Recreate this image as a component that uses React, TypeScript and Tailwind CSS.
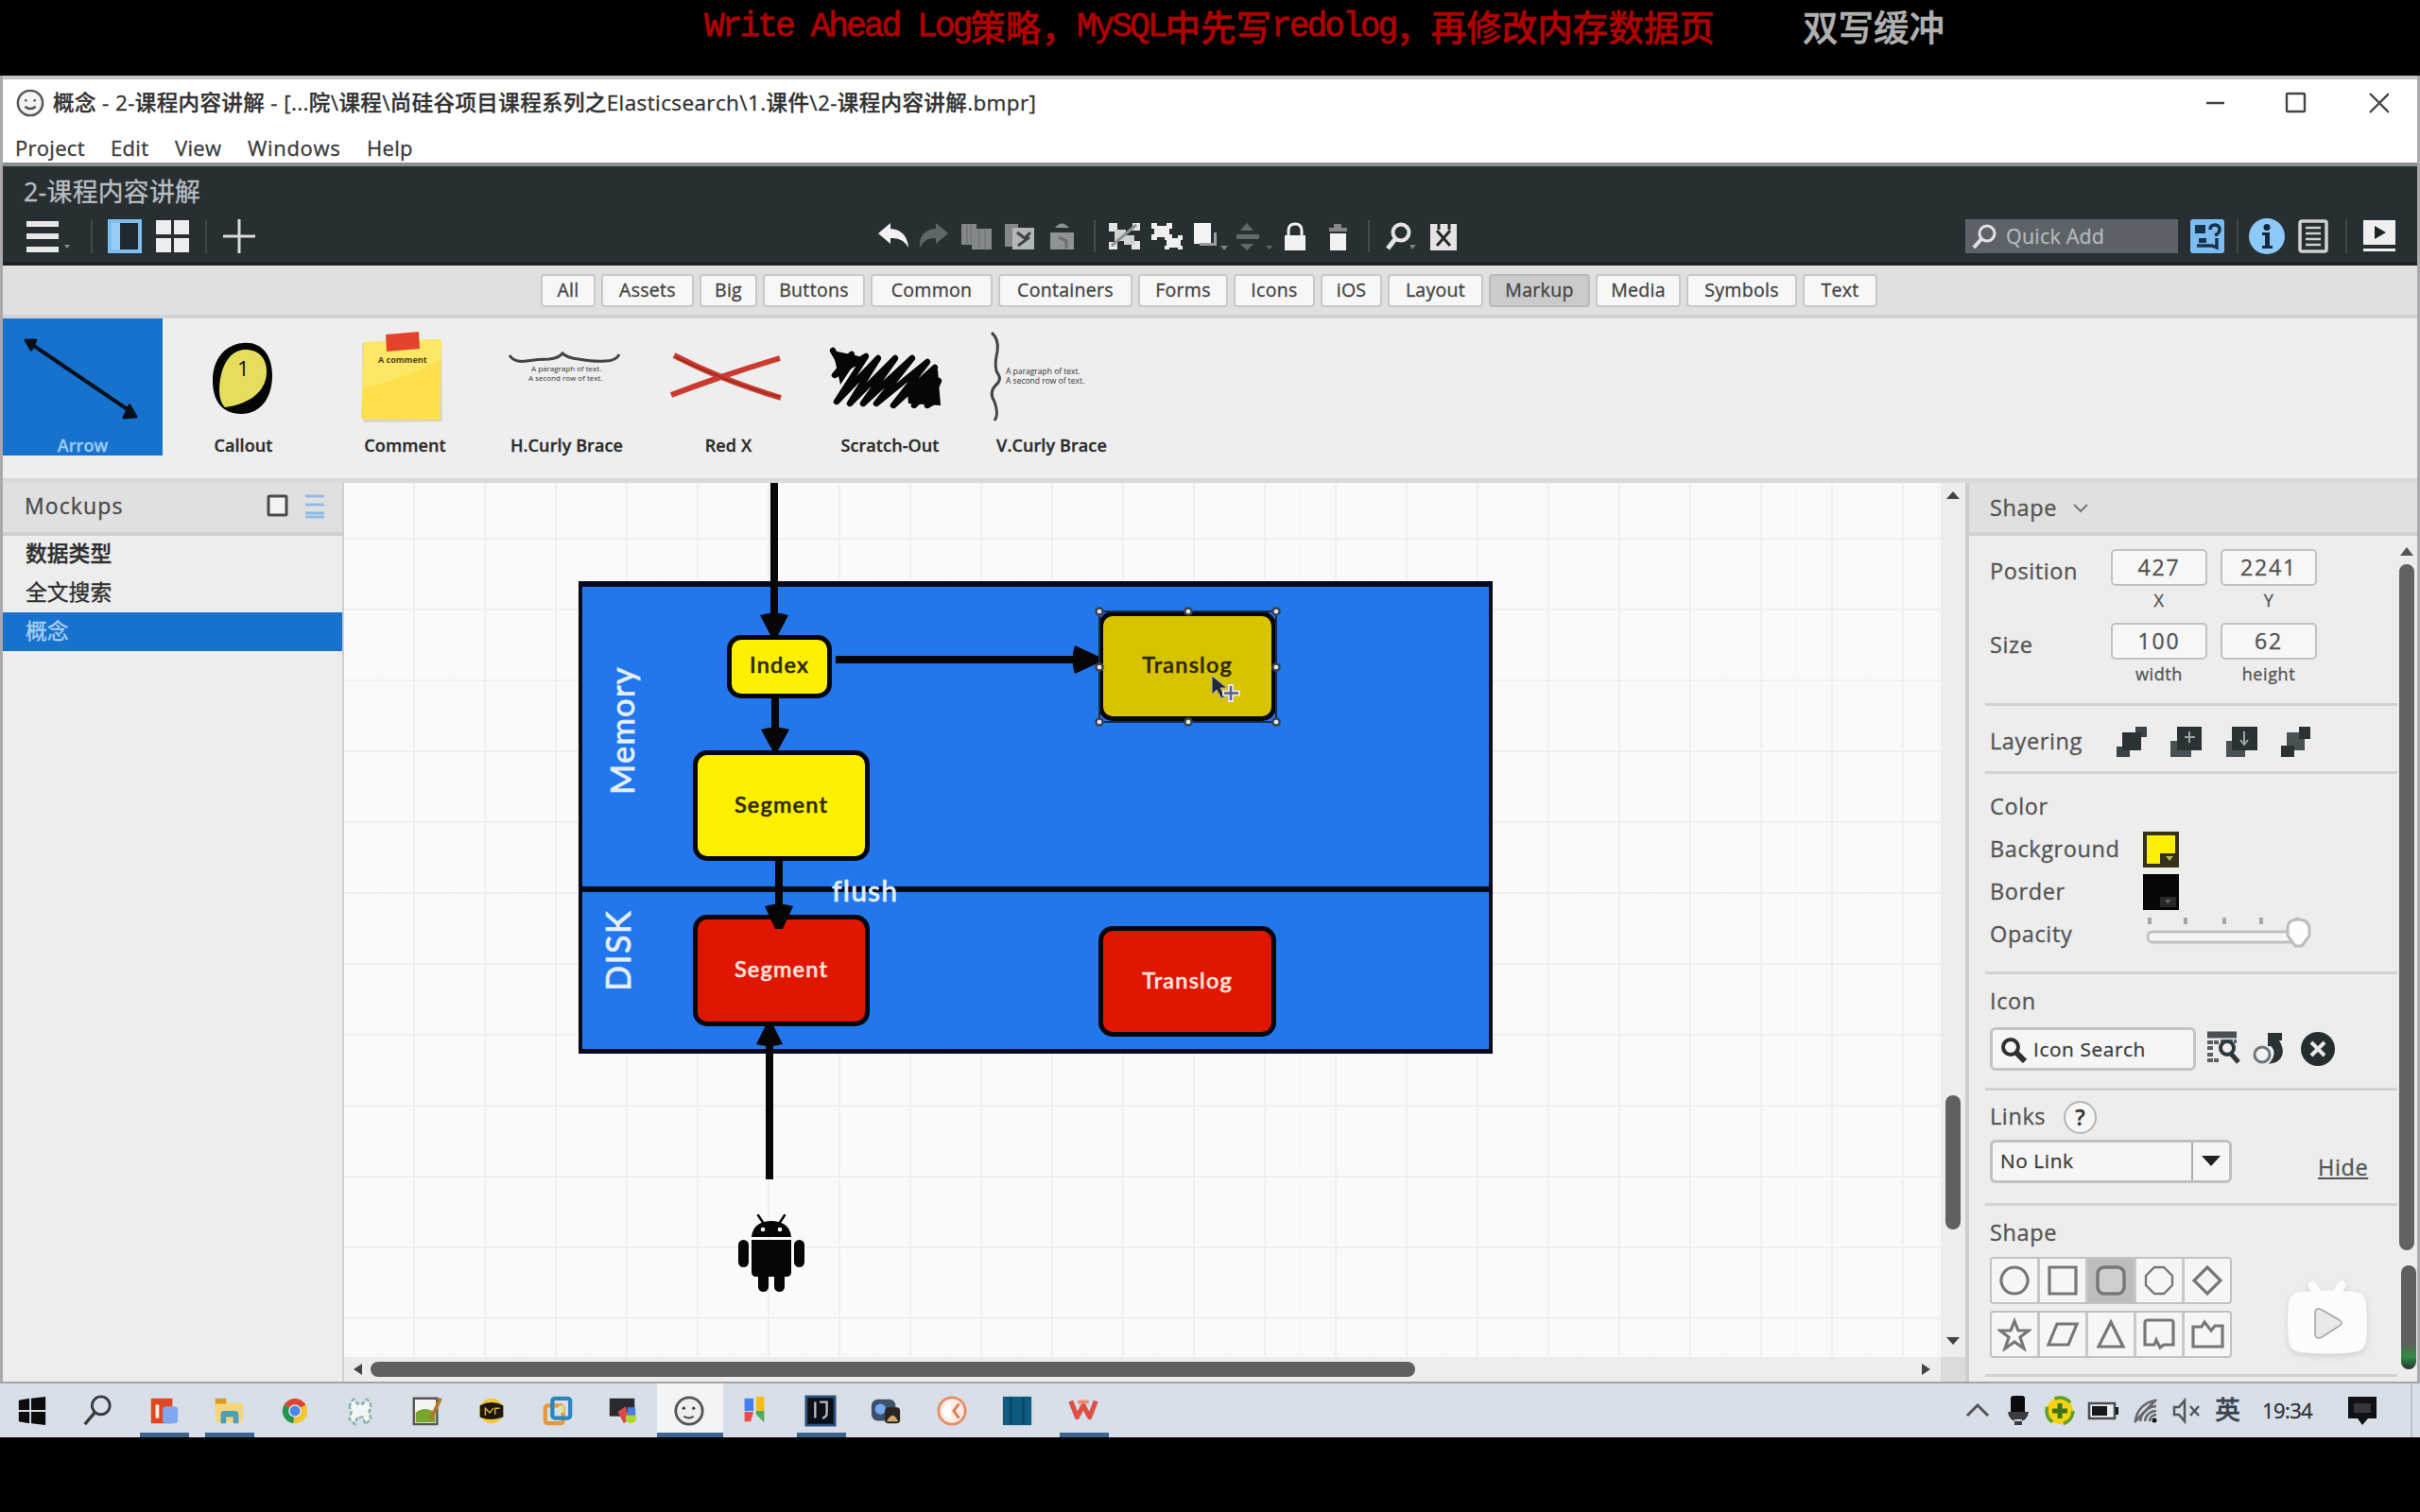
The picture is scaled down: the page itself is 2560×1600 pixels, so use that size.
import React from "react";

const SANS = "font-['Open_Sans','Noto_Sans_CJK_SC',sans-serif]";

/* ---------- top banner ---------- */

function Banner() {
  return (
    <div className="flex h-20 shrink-0 items-start bg-black pl-[745px] font-['Liberation_Mono','Noto_Sans_CJK_SC',monospace] leading-[56px] whitespace-pre">
      <div className="flex w-[1162px] text-[#b00000]">
        <Latin>Write Ahead Log</Latin>
        <Han>策略，</Han>
        <Latin>MySQL</Latin>
        <Han>中先写</Han>
        <Latin>redolog</Latin>
        <Han>，再修改内存数据页</Han>
      </div>
      <div className="text-[#b0b0b0]">
        <Han>双写缓冲</Han>
      </div>
    </div>
  );
}
const Latin = ({ children }: { children: string }) => (
  <span className="pt-px text-[36px] tracking-[-2.85px] [-webkit-text-stroke:0.8px]">{children}</span>
);
const Han = ({ children }: { children: string }) => (
  <span className="block font-['Noto_Sans_CJK_SC',sans-serif] text-[37.5px] leading-[54px] font-medium [-webkit-text-stroke:0.5px]">{children}</span>
);

/* ---------- title bar and menu ---------- */

const Face = ({ className }: { className: string }) => (
  <svg viewBox="0 0 32 32" className={className} fill="none" stroke="#555" strokeWidth="2.6">
    <circle cx="16" cy="16" r="14" fill="#f4f4f4" />
    <circle cx="11" cy="13" r="1.4" fill="#555" stroke="none" />
    <circle cx="21" cy="13" r="1.4" fill="#555" stroke="none" />
    <path d="M10 20q6 5 12 0" />
  </svg>
);

function TitleBar() {
  return (
    <div className="flex h-[52px] items-center border-t-4 border-[#c4c2c4] bg-white pl-3.5 pr-[30px] pt-0.5">
      <Face className="size-[30px]" />
      <div className="ml-[9px] grow text-[22.5px] font-medium tracking-[0.39px] text-[#333] whitespace-pre">
        概念 - 2-课程内容讲解 - [...院\课程\尚硅谷项目课程系列之Elasticsearch\1.课件\2-课程内容讲解.bmpr]
      </div>
      <svg viewBox="0 0 200 30" className="h-[30px] w-[200px]" fill="none" stroke="#444" strokeWidth="2.4">
        <path d="M7 15h19M180 5l20 20M200 5l-20 20" />
        <rect x="92" y="5" width="19" height="19" rx="1" />
      </svg>
    </div>
  );
}

function MenuBar() {
  return (
    <div className="flex h-[44px] items-center border-b-4 border-[#8b8d8f] bg-white pl-[13px] pt-2 text-[22px] font-medium text-[#3c3c3c]">
      <span className="w-[101px] tracking-[0.3px]">Project</span>
      <span className="w-[68px] tracking-[0.3px]">Edit</span>
      <span className="w-[77px] tracking-[0.3px]">View</span>
      <span className="w-[126px] tracking-[0.7px]">Windows</span>
      <span className="tracking-[0.3px]">Help</span>
    </div>
  );
}

/* ---------- dark toolbar ---------- */

const Sep = ({ className }: { className: string }) => (
  <div className={`h-9 w-0.5 bg-[#40474a] ${className}`} />
);

function Toolbar() {
  return (
    <div className="h-[105px] shrink-0 border-b-4 border-[#1f2224] bg-[#282f32]">
      <div className="flex h-[56px] items-center pb-0.5 pl-[22px] text-[26.8px] tracking-[0.3px] text-[#b9bdbf]">2-课程内容讲解</div>
      <div className="flex h-9 items-center">
        <svg viewBox="0 0 50 36" className="ml-[25px] h-9 w-[50px]" fill="#e8e8e8">
          <path d="M0 2h34v6H0zM0 15h34v6H0zM0 29h34v6H0z" />
          <path d="M40 27h6l-3 4z" fill="#8a8f91" />
        </svg>
        <Sep className="ml-[18px]" />
        <svg viewBox="0 0 36 36" className="ml-4 size-9">
          <rect x="2" y="2" width="32" height="32" fill="#1d2a33" stroke="#7dbdf0" strokeWidth="4" />
          <path d="M4 4h9v28H4z" fill="#9acdf5" />
        </svg>
        <svg viewBox="0 0 36 36" className="ml-[15px] size-9" fill="#ededed">
          <path d="M0 1h16v15H0zM19 1h16v15H19zM0 20h16v15H0zM19 20h16v15H19z" />
        </svg>
        <Sep className="ml-4" />
        <svg viewBox="0 0 36 36" className="ml-4 size-9" stroke="#dcdcdc" strokeWidth="3">
          <path d="M18 0v36M1 18h34" />
        </svg>
        <svg viewBox="0 0 630 36" className="ml-[652px] h-9 w-[630px]" fill="#e4e4e4">
          <path d="M6 15L19 4v6c12 1 18 8 19 20-5-8-10-10-19-10v6z" fill="#f2f2f2" />
          <path d="M80 15L67 4v6c-12 1-18 8-17 20 5-8 8-10 17-10v6z" fill="#5f6669" />
          <path d="M94 5h16v22H94zM105 10h21v22h-21z" fill="#84888a" />
          <path d="M100 6v20M104 6v20M113 11v20M119 11v20" stroke="#6f7476" strokeWidth="1.500" />
          <path d="M140 5h14v24h-14z" fill="#84888a" />
          <path d="M148 9h23v23h-23z" fill="#b4b6b8" />
          <path d="M153 14l8 6 6-6M154 28l12-9" stroke="#3f4548" strokeWidth="3" fill="none" />
          <path d="M188 14h25v18h-25zM193 9q7-9 15 0z" fill="#8f9395" />
          <path d="M197 19l8 4v8" stroke="#6a6f71" strokeWidth="3" fill="none" />
          <rect x="234" y="1" width="2" height="34" fill="#454c4f" />
          <path d="M250 4h9v9h-9zM275 4h8v8h-8zM250 24h9v8h-9zM274 23h9v9h-9z" />
          <path d="M256 11h12v12h-12zM266 17h11v10h-11z" fill="#cfd1d2" />
          <path d="M253 28l26-22" stroke="#8d9193" strokeWidth="3" />
          <path d="M295 4h6v3h10V4h6v6h-3v6h3v6h-6v-3h-10v3h-6v-6h3v-6h-3zM309 17h5v3h9v-3h5v5h-2v6h2v4h-5v-2h-9v2h-5v-4h2v-6h-2z" fill="#f0f0f0" />
          <path d="M340 4h18v22h-18z" fill="#f4f4f4" />
          <path d="M346 28h18V14h-3v11h-15z" fill="#9b9fa1" />
          <path d="M368 28h8l-4 5z" fill="#7b8082" />
          <path d="M396 4l7 8h-14zM385 16h24v5h-24zM396 33l7-7h-14zM416 28h7l-3 4z" fill="#62686b" />
          <path d="M436 17h22v16h-22z" fill="#f2f2f2" />
          <path d="M440 18v-6q0-7 7-7t7 7v6" fill="none" stroke="#f2f2f2" strokeWidth="3" />
          <path d="M484 15h17v18h-17z" fill="#f2f2f2" />
          <path d="M483 9h19v4h-19zM488 5h8v4h-8z" fill="#85898b" />
          <rect x="524" y="1" width="2" height="34" fill="#454c4f" />
          <circle cx="559" cy="14" r="8.5" fill="none" stroke="#e4e4e4" strokeWidth="4" />
          <path d="M553 21l-8 10" stroke="#e4e4e4" strokeWidth="5" />
          <path d="M568 27h7l-4 5z" fill="#7b8082" />
          <path d="M590 5h28v28h-28z" />
          <path d="M597 12l14 16M611 12l-14 16M599 5v6M610 5v6" stroke="#24292c" strokeWidth="3" />
        </svg>
        <div className="ml-[526px] flex h-9 w-[225px] items-center bg-[#5c6267] pl-1.5 text-[21.5px] tracking-[0.2px] text-[#b4b8bb]">
          <svg viewBox="0 0 30 30" className="mr-[7px] size-[30px]" fill="none" stroke="#dfe2e4" strokeWidth="3">
            <circle cx="17" cy="12" r="8" />
            <path d="M11 18L3 27" strokeWidth="4" />
          </svg>
          Quick Add
        </div>
        <svg viewBox="0 0 36 36" className="ml-[13px] size-9">
          <rect width="36" height="36" rx="3" fill="#7cbcf2" />
          <path d="M5 6h11v9H5zM9 20h8v5H9z" fill="#17324a" />
          <path d="M21 11q0-5 5-5t5 5q0 4-5 6M7 28h16l5 2V20" fill="none" stroke="#17324a" strokeWidth="3.500" />
        </svg>
        <Sep className="ml-[13px]" />
        <svg viewBox="0 0 38 38" className="ml-[11px] size-[38px] shrink-0">
          <circle cx="19" cy="19" r="19" fill="#8cc8f8" />
          <circle cx="19" cy="9.500" r="3.500" fill="#16283a" />
          <path d="M14 15h8v14h3v3H14v-3h3V18h-3z" fill="#16283a" />
        </svg>
        <svg viewBox="0 0 32 36" className="ml-[14px] h-9 w-8" fill="none" stroke="#cfd1d2">
          <rect x="2" y="2" width="28" height="32" rx="2" strokeWidth="3.500" />
          <path d="M8 9h16M8 15h16M8 21h16M8 27h16" strokeWidth="2.500" />
        </svg>
        <Sep className="ml-[18px]" />
        <svg viewBox="0 0 36 36" className="ml-4 size-9">
          <path d="M1 1h34v26H1zM1 31h34v3H1z" fill="#efefef" />
          <path d="M13 7l12 7-12 7z" fill="#1c2225" />
        </svg>
      </div>
    </div>
  );
}

/* ---------- category filter ---------- */

function Filters() {
  const tab = "flex h-[35px] items-center justify-center rounded-[4px] border-2 pb-px text-[19.5px] font-medium tracking-[0.3px] text-[#444] border-[#c9c9c9] bg-[#f7f7f7]";
  return (
    <div className="flex h-[56px] shrink-0 items-start gap-1.5 border-b-4 border-[#d2d2d2] bg-[#e0e0e0] pl-[569px] pt-[9px]">
      <div className={`${tab} w-[58px]`}>All</div>
      <div className={`${tab} w-[98px]`}>Assets</div>
      <div className={`${tab} w-[61px]`}>Big</div>
      <div className={`${tab} w-[108px]`}>Buttons</div>
      <div className={`${tab} w-[129px]`}>Common</div>
      <div className={`${tab} w-[142px]`}>Containers</div>
      <div className={`${tab} w-[95px]`}>Forms</div>
      <div className={`${tab} w-[86px]`}>Icons</div>
      <div className={`${tab} w-[65px]`}>iOS</div>
      <div className={`${tab} w-[101px]`}>Layout</div>
      <div className="flex h-[35px] w-[107px] items-center justify-center rounded-[4px] border-2 border-[#bababa] bg-[#cbcbcb] pb-px text-[19.5px] font-medium tracking-[0.3px] text-[#444]">
        Markup
      </div>
      <div className={`${tab} w-[90px]`}>Media</div>
      <div className={`${tab} w-[117px]`}>Symbols</div>
      <div className={`${tab} w-[79px]`}>Text</div>
    </div>
  );
}

/* ---------- component library ---------- */

function Tile({ label, selected, children }: { label: string; selected?: boolean; children: React.ReactNode }) {
  return (
    <div className={`flex h-[145px] flex-col items-center ${selected ? "w-[169px] bg-[#1672cd] text-[#9cc9f3]" : "w-[171px] text-[#2c2c2c]"}`}>
      <svg viewBox="0 0 171 121" className="h-[121px] w-[171px] shrink-0">
        {children}
      </svg>
      <div className="h-6 text-[18px] leading-[27px] font-semibold tracking-[0.1px] whitespace-nowrap">{label}</div>
    </div>
  );
}

function Library() {
  return (
    <div className="flex h-[174px] shrink-0 border-b-[5px] border-[#dadada] bg-[#eeeeee]">
      <Tile label="Arrow" selected>
        <path d="M31 27L137 99" stroke="#06101c" strokeWidth="4" />
        <path d="M25 23l11 0-5 10zM142 104l-13 1 6-13z" fill="#06101c" stroke="#06101c" strokeWidth="3" strokeLinejoin="round" />
      </Tile>
      <Tile label="Callout">
        <path d="M85 26c19-2 31 12 31 34 0 24-12 41-33 41-20 0-30-14-30-35 0-22 12-38 32-40z" fill="#060606" />
        <path d="M86 33c14-1 24 8 24 23 0 20-16 34-44 38-6-6-7-17-5-30 3-18 12-30 25-31z" fill="#e5de5c" />
        <text x="79" y="61" fontSize="22" fill="#111" className={SANS}>1</text>
      </Tile>
      <Tile label="Comment">
        <path d="M40 26l84-4 1 87-84 1z" fill="#c9b87a" opacity=".45" />
        <path d="M42 25l82-3-2 85-83-1z" fill="#fde04c" />
        <path d="M42 25l82-3-1 22q-40 20-82 30z" fill="#fde96f" opacity=".7" />
        <path d="M65 17l35-3 1 18-35 3z" fill="#e4442b" />
        <text x="57" y="47" fontSize="9" fontWeight="700" fill="#4b431a" className={SANS}>A comment</text>
      </Tile>
      <Tile label="H.Curly Brace">
        <path d="M25 39q5 8 18 6 12-2 24-2 10-1 14-6 6 5 17 6 18 3 28 2 12 0 15-7" fill="none" stroke="#444" strokeWidth="3" />
        <text x="48" y="56" fontSize="8" fill="#333" className={SANS}>A paragraph of text.</text>
        <text x="45" y="66" fontSize="8" fill="#333" className={SANS}>A second row of text.</text>
      </Tile>
      <Tile label="Red X">
        <path d="M28 39q50 26 113 45M25 81Q80 60 140 42" fill="none" stroke="#cc3a2f" strokeWidth="6" />
        <path d="M30 41q50 25 109 42" fill="none" stroke="#93291f" strokeWidth="1.500" />
      </Tile>
      <Tile label="Scratch-Out">
        <path
          d="M25 34l8 14 12-10-18 22 33-20-31 48 44-46-30 48 48-48-34 48 52-48-38 48 54-44-36 46 44-40-22 40 26-26-12 26 10-6"
          fill="none" stroke="#060606" strokeWidth="6.500" strokeLinejoin="round" strokeLinecap="round"
        />
        <path d="M25 34l28 6-20 30zM104 78l32-24 3 38-34-2z" fill="#060606" />
      </Tile>
      <Tile label="V.Curly Brace">
        <path d="M22 15q8 7 6 20-4 18 1 24 4 6-3 12-7 7-1 17 5 14 0 20" fill="none" stroke="#444" strokeWidth="3" />
        <text x="37" y="59" fontSize="8.500" fill="#333" className={SANS}>A paragraph of text.</text>
        <text x="37" y="69" fontSize="8.500" fill="#333" className={SANS}>A second row of text.</text>
      </Tile>
    </div>
  );
}

/* ---------- mockup list ---------- */

function Mockups() {
  return (
    <div className="w-[361px] shrink-0 border-r-2 border-[#cfcfcf] bg-[#ededed] text-[22.8px] text-[#2e2e2e]">
      <div className="flex h-[56px] items-center border-b-4 border-[#d0d0d0] bg-[#e0e0e0] pb-1 pl-[23px] pr-[17px] text-[23px] font-medium tracking-[1.1px] text-[#4a4a4a]">
        <span className="grow">Mockups</span>
        <svg viewBox="0 0 64 28" className="h-7 w-16" fill="none">
          <rect x="3" y="4" width="19" height="20" rx="1" fill="#f3f3f3" stroke="#4a4a4a" strokeWidth="3" />
          <path d="M42 4h20M42 13h20M42 22h20M42 26h20" stroke="#8fbbe6" strokeWidth="3" />
        </svg>
      </div>
      <div className="flex h-10 items-center pb-0.5 pl-6 font-medium">数据类型</div>
      <div className="flex h-[41px] items-center pl-6">全文搜索</div>
      <div className="flex h-[41px] items-center bg-[#1672cd] pl-6 text-[#a9d0f5]">概念</div>
    </div>
  );
}

/* ---------- canvas ---------- */

const NODE = "absolute flex items-center justify-center rounded-[15px] border-[5px] border-[#05070c] text-[23.5px]";
const NODE_FONT = "font-['Lato','Open_Sans',sans-serif] font-medium tracking-[1.2px] [-webkit-text-stroke:0.6px]";

function Android() {
  return (
    <svg viewBox="0 0 72 84" className="absolute left-[416px] top-[773px] h-[84px] w-[72px]" fill="#060606">
      <path d="M15 25C16 13 25 8 36 8s20 5 21 17z" />
      <path d="M22 2l6 9M50 2l-6 9" stroke="#060606" strokeWidth="2.500" strokeLinecap="round" />
      <circle cx="27" cy="17" r="2.300" fill="#fff" />
      <circle cx="45" cy="17" r="2.300" fill="#fff" />
      <path d="M15 28h42v34q0 5-5 5H20q-5 0-5-5z" />
      <rect x="1" y="28" width="11" height="29" rx="5.500" />
      <rect x="60" y="28" width="11" height="29" rx="5.500" />
      <rect x="22" y="56" width="11" height="27" rx="5.500" />
      <rect x="39" y="56" width="11" height="27" rx="5.500" />
    </svg>
  );
}

function Canvas() {
  return (
    <div className="relative grow overflow-hidden bg-[#fafafa] bg-[linear-gradient(to_right,#f0f0f0_2px,transparent_2px),linear-gradient(to_bottom,#f0f0f0_2px,transparent_2px),linear-gradient(to_right,#f6f6f6_1px,transparent_1px)] bg-[size:75px_75px,75px_75px,37.5px_75px] bg-[position:73px_58px,73px_58px,73px_58px]">
      <div className="absolute left-[248px] top-[104px] h-[328px] w-[967px] border-4 border-t-[6px] border-[#060b1c] bg-[#2277ec]" />
      <div className="absolute left-[248px] top-[427px] h-[177px] w-[967px] border-[6px] border-x-4 border-b-[5px] border-[#060b1c] bg-[#2277ec]" />
      <div className={`${NODE_FONT} absolute left-[209px] top-[242px] flex h-10 w-[170px] -rotate-90 items-center justify-center text-[34.5px] text-[#e3efff]`}>Memory</div>
      <div className={`${NODE_FONT} absolute left-[204px] top-[475px] flex h-10 w-[170px] -rotate-90 items-center justify-center text-[36px] text-[#e3efff]`}>DISK</div>

      <div className={`${NODE} ${NODE_FONT} left-[405px] top-[161px] h-[67px] w-[111px] bg-[#fdf000] pb-1 text-[#2b2800]`}>Index</div>
      <div className={`${NODE} ${NODE_FONT} left-[369px] top-[283px] h-[117px] w-[187px] bg-[#fdf000] pb-0.5 text-[#2b2800]`}>Segment</div>
      <div className={`${NODE} ${NODE_FONT} left-[369px] top-[457px] h-[118px] w-[187px] bg-[#e01602] pb-0.5 text-[#ffe3df]`}>Segment</div>
      <div className={`${NODE} ${NODE_FONT} left-[798px] top-[469px] h-[117px] w-[188px] bg-[#e01602] pb-0.5 text-[#ffe3df]`}>Translog</div>
      <div className={`${NODE} ${NODE_FONT} left-[798px] top-[136px] h-[116px] w-[188px] bg-[#d8c300] pb-0.5 text-[#2b2800]`}>Translog</div>

      <svg viewBox="0 0 1240 900" className="absolute left-0 top-0 h-[900px] w-[1240px]">
        <g stroke="#060606" strokeWidth="8">
          <path d="M455 0v145M456 226v40M460 398v58M450 737V595M520 187h258" />
        </g>
        <g fill="#060606">
          <path d="M440 140q15-5 30 0l-12 23h-6zM441 261q15-5 30 0l-12 22h-6zM445 448q15-5 30 0l-11 24h-8zM436 594q14 4 28 0l-11-22h-6zM773 172q-5 15 0 30l26-12v-6z" />
        </g>
        <path d="M799 136h187v117H799z" fill="none" stroke="#1b2a4a" strokeWidth="2" />
        <g fill="#e8ecf5" stroke="#3c4050" strokeWidth="2.500">
          {[799, 893, 986].map((x) => [136, 195, 253].map((y) => (x === 893 && y === 195 ? null : <circle key={x + "-" + y} cx={x} cy={y} r="3.600" />)))}
        </g>
        <path d="M918 204v20l5-5 5 9 4-2-5-9h7z" fill="#24283c" stroke="#b9bccb" strokeWidth="1" />
        <path d="M938 213v19M929 222.500h19" stroke="#e9e9e9" strokeWidth="6" />
        <path d="M938 215v15M931 222.500h15" stroke="#5a628c" strokeWidth="2.500" />
      </svg>
      <div className={`${NODE_FONT} absolute left-[516px] top-[413px] text-[30px] leading-9 text-[#e3efff]`}>flush</div>
      <Android />
    </div>
  );
}

function Workspace() {
  return (
    <div className="flex grow flex-col">
      <div className="flex grow">
        <Canvas />
        <div className="flex w-[26px] shrink-0 flex-col items-center bg-[#ededed] pt-2">
          <svg viewBox="0 0 14 10" className="h-2.5 w-3.5" fill="#444"><path d="M7 1l7 8H0z" /></svg>
          <div className="mt-[630px] h-[142px] w-4 rounded-full bg-[#606060]" />
          <svg viewBox="0 0 14 10" className="mt-[113px] h-2.5 w-3.5" fill="#444"><path d="M7 9l7-8H0z" /></svg>
        </div>
      </div>
      <div className="flex h-[26px] shrink-0 items-center bg-[#ededed] pl-2.5">
        <svg viewBox="0 0 10 14" className="h-3.5 w-2.5" fill="#444"><path d="M0 7l9-6v12z" /></svg>
        <div className="ml-2 h-4 w-[1105px] rounded-full bg-[#606060]" />
        <svg viewBox="0 0 10 14" className="ml-auto mr-[11px] h-3.5 w-2.5" fill="#444"><path d="M10 7L1 1v12z" /></svg>
        <div className="h-[26px] w-[26px] bg-[#dcdcdc]" />
      </div>
    </div>
  );
}

/* ---------- inspector ---------- */

const Field = ({ value, caption }: { value: string; caption: string }) => (
  <div className="flex w-[102px] flex-col items-center">
    <div className="flex h-[39px] w-full items-center justify-center rounded-[5px] border-2 border-[#c2c2c2] bg-[#f7f7f7] text-[23px] tracking-[1.8px]">{value}</div>
    <div className="h-[40px] text-[18px] leading-[31px]">{caption}</div>
  </div>
);

const SHAPE_ICONS = [
  "M18 4a14 14 0 1 0 .01 0z",
  "M4 4h28v28H4z",
  "M11 4h14l7 7v14l-7 7H11l-7-7V11z",
  "M13 4h10l9 9v10l-9 9H13l-9-9V13z",
  "M18 4l14 14-14 14L4 18z",
  "M18 4l4 10h11l-9 7 4 12-10-7-10 7 4-12-9-7h11z",
  "M12 7h21l-9 22H3z",
  "M18 5l13 26H5z",
  "M6 3h24q3 0 3 3v23h-10l-4 3-4-8-2 5H3V6q0-3 3-3z",
  "M3 10h9l3-5 7 9 4-5h8v22H3z",
];

function ShapeRow({ from }: { from: number }) {
  return (
    <div className="flex h-[50px] w-[256px] shrink-0 divide-x-[3px] divide-[#c8c8c8] overflow-hidden rounded-[4px] border-2 border-[#c2c2c2] bg-[#f6f6f6]">
      {SHAPE_ICONS.slice(from, from + 5).map((d, i) => (
        <div key={d} className={`flex flex-1 items-center justify-center ${from + i === 2 ? "bg-[#bdbdbd]" : ""}`}>
          <svg viewBox="0 0 36 36" className="size-9 shrink-0">
            {from + i === 2 ? (
              <rect x="4" y="4" width="28" height="28" rx="7" fill="#cfcfcf" stroke="#777" strokeWidth="3.500" />
            ) : (
              <path d={d} fill="none" stroke="#777" strokeWidth={from + i === 3 ? 2.4 : 3.2} />
            )}
          </svg>
        </div>
      ))}
    </div>
  );
}

function Inspector() {
  const rule = "ml-[-5px] h-[3px] shrink-0 w-[436px] bg-[#d2d2d2]";
  return (
    <div className="flex w-[478px] shrink-0 flex-col border-l-4 border-[#cdcdcd] bg-[#ededed] text-[23.5px] font-medium tracking-[0.6px] text-[#555]">
      <div className="flex h-[56px] shrink-0 items-center border-b-4 border-[#d2d2d2] bg-[#e0e0e0] pl-[22px] pt-0.5">
        Shape
        <svg viewBox="0 0 16 10" className="ml-[17px] h-2.5 w-4" fill="none" stroke="#777" strokeWidth="2"><path d="M1 1l7 7 7-7" /></svg>
      </div>
      <div className="relative flex grow pl-[22px]">
        <div className="flex w-[431px] shrink-0 flex-col">
          <div className="flex h-[92px] pt-[14px]">
            <div className="w-[128px] pt-1.5">Position</div>
            <Field value="427" caption="X" />
            <div className="w-3.5" />
            <Field value="2241" caption="Y" />
          </div>
          <div className="flex h-[85px]">
            <div className="w-[128px] pt-1.5">Size</div>
            <Field value="100" caption="width" />
            <div className="w-3.5" />
            <Field value="62" caption="height" />
          </div>
          <div className={rule} />
          <div className="flex h-[69px] items-center pt-[6px]">
            <span className="w-[134px]">Layering</span>
            <svg viewBox="0 0 206 34" className="h-[34px] w-[206px]" fill="#2b3236">
              <path d="M0 22h14v11H0zM20 1h12v11H20z" fill="#3c4347" />
              <path d="M6 7h20v19H6z" />
              <path d="M57 16h22v17H57z" fill="#4a5155" />
              <path d="M64 1h26v25H64z" />
              <path d="M77 6v12M72 12h11" stroke="#9ea3a6" strokeWidth="2" />
              <path d="M116 16h20v17h-20z" fill="#4a5155" />
              <path d="M122 1h27v25h-27z" />
              <path d="M135 6v14M131 15l4 5 4-5" stroke="#9ea3a6" strokeWidth="2" fill="none" />
              <path d="M180 7h19v19h-19z" fill="#4a5155" />
              <path d="M174 21h14v12h-14zM193 1h12v13h-12z" />
            </svg>
          </div>
          <div className={rule} />
          <div className="h-[57px] pt-[17px]">Color</div>
          <div className="flex h-[45px] items-center">
            <span className="w-[162px]">Background</span>
            <svg viewBox="0 0 38 38" className="size-[38px]">
              <path d="M0 0h38v38H0z" fill="#34321a" />
              <path d="M4 4h30v19H18v11H4z" fill="#fdf000" />
              <path d="M24 26h8l-4 5z" fill="#bdb64a" />
            </svg>
          </div>
          <div className="flex h-[45px] items-center">
            <span className="w-[162px]">Border</span>
            <svg viewBox="0 0 38 38" className="size-[38px]">
              <path d="M0 0h38v38H0z" fill="#060606" />
              <path d="M18 24h17v11H18z" fill="#26282a" />
              <path d="M23 27h7l-4 4z" fill="#666" />
            </svg>
          </div>
          <div className="flex h-[62px] items-start pt-1">
            <span className="w-[163px] leading-[37px]">Opacity</span>
            <svg viewBox="0 0 180 40" className="h-10 w-[180px]">
              <path d="M6 1v7M44 1v7M85 1v7M124 1v7M162 1v7" stroke="#a5a5a5" strokeWidth="4" />
              <rect x="4" y="16" width="164" height="11" rx="5" fill="#f6f6f6" stroke="#c0c0c0" strokeWidth="3" />
              <path d="M152 12q0-9 11-9t12 9v8l-8 11h-7l-8-11z" fill="#fcfcfc" stroke="#bdbdbd" strokeWidth="3" strokeLinejoin="round" />
            </svg>
          </div>
          <div className={rule} />
          <div className="h-[56px] pt-[11px]">Icon</div>
          <div className="flex h-[64px] items-start">
            <div className="flex h-[46px] w-[218px] items-center rounded-[6px] border-[3px] border-[#c4c4c4] bg-[#f6f6f6] pl-2 pt-0.5 text-[20.8px] tracking-[0.6px] text-[#3e3e3e]">
              <svg viewBox="0 0 28 28" className="mr-[7px] size-7 shrink-0" fill="none" stroke="#303030">
                <circle cx="11" cy="11" r="8" strokeWidth="4" />
                <path d="M17 17l9 9" strokeWidth="6" />
              </svg>
              Icon Search
            </div>
            <svg viewBox="0 0 140 38" className="ml-2.5 mt-1 h-[38px] w-[140px]">
              <path d="M2 4h31" stroke="#4a5154" strokeWidth="7" />
              <path d="M2 12h12M2 18h7M2 25h7M2 31h12M16 11h17" stroke="#5a6164" strokeWidth="4" strokeDasharray="6 1" />
              <circle cx="23" cy="18" r="7" fill="#ededed" stroke="#30373a" strokeWidth="4" />
              <path d="M27 24l8 9" stroke="#30373a" strokeWidth="5" />
              <path d="M66 2h15v8h-3q9 15-3 23l-8 2q10-12 2-19h-3z" fill="#2b3236" />
              <circle cx="60" cy="25" r="8" fill="#f2f2f2" stroke="#70767a" strokeWidth="3" />
              <circle cx="119" cy="19" r="18" fill="#262d31" />
              <path d="M112 12l14 14M126 12l-14 14" stroke="#e8e8e8" strokeWidth="4" />
            </svg>
          </div>
          <div className={rule} />
          <div className="flex h-[52px] items-center pt-[4px]">
            Links
            <div className="ml-[19px] flex size-[35px] items-center justify-center rounded-full border-2 border-[#b5b5b5] bg-[#f6f6f6] text-[23px] font-semibold text-[#333]">?</div>
          </div>
          <div className="flex h-[67px] items-start">
            <div className="flex h-[46px] w-[256px] items-center rounded-[6px] border-[3px] border-[#c0c0c0] bg-[#f6f6f6] text-[20.8px] tracking-[0.6px] text-[#3e3e3e]">
              <span className="grow pl-2">No Link</span>
              <div className="flex h-full w-[40px] items-center justify-center border-l-2 border-[#b0b0b0]">
                <svg viewBox="0 0 20 12" className="h-3 w-5" fill="#222"><path d="M0 0h20L10 11z" /></svg>
              </div>
            </div>
            <span className="ml-[91px] mt-3 underline decoration-2 underline-offset-2">Hide</span>
          </div>
          <div className={rule} />
          <div className="h-[54px] pt-[11px]">Shape</div>
          <ShapeRow from={0} />
          <div className="h-[7px]" />
          <ShapeRow from={5} />
          <div className="h-[17px]" />
          <div className={rule} />
        </div>
        <div className="flex w-[20px] flex-col items-center pt-3">
          <svg viewBox="0 0 14 10" className="h-2.5 w-3.5" fill="#555"><path d="M7 0l7 9H0z" /></svg>
          <div className="mt-2 h-[726px] w-4 shrink-0 rounded-full bg-[#626262]" />
          <div className="mt-[16px] ml-1 h-[110px] w-4 shrink-0 rounded-full bg-[linear-gradient(to_bottom,#5e5e5e_75%,#2f8a45_88%,#25352a)]" />
        </div>
        <svg viewBox="0 0 84 80" className="absolute left-[337px] top-[787px] h-20 w-[84px] drop-shadow-md">
          <path d="M26 6l8 12M57 6l-8 12" stroke="#fcfcfc" strokeWidth="9" strokeLinecap="round" />
          <path d="M14 13q28-3 56 0 12 1 13 13 2 20 0 38-1 12-13 13-28 3-56 0-12-1-13-13-2-19 0-38 1-12 13-13z" fill="#fcfcfc" />
          <path d="M29 36q0-7 7-4l19 11q4 3 0 6L36 61q-6 3-7-3z" fill="#e8e8e8" stroke="#a3a3a3" strokeWidth="1.500" />
        </svg>
      </div>
    </div>
  );
}

/* ---------- taskbar ---------- */

function TaskIcon({ active, open, children }: { active?: boolean; open?: boolean; children: React.ReactNode }) {
  return (
    <div className={`flex h-full w-[69.5px] shrink-0 flex-col items-center justify-between pt-[12px] ${active ? "bg-[#f3f4f6]" : ""}`}>
      <svg viewBox="0 0 36 36" className="-ml-0.5 size-[34px]">{children}</svg>
      <div className={`h-[5px] ${active ? "w-full bg-[#3b658e]" : open ? "w-[52px] bg-[#3b658e]" : ""}`} />
    </div>
  );
}

function Taskbar() {
  return (
    <div className="flex h-[59px] shrink-0 items-center border-t-2 border-[#a2a4a8] bg-[#d8dfe9] text-[#333]">
      <TaskIcon><path d="M3 6l12-2v13H3zM17 4l16-2v15H17zM3 19h12v13L3 30zM17 19h16v15l-16-2z" fill="#0c0c0c" /></TaskIcon>
      <TaskIcon>
        <circle cx="22" cy="12" r="10" fill="none" stroke="#3a3a3a" strokeWidth="3" />
        <path d="M15 20L4 33" stroke="#3a3a3a" strokeWidth="3.500" />
      </TaskIcon>
      <TaskIcon open>
        <path d="M4 4h24v28H4z" fill="#e2461f" />
        <path d="M11 11v15" stroke="#fff0e8" strokeWidth="4" />
        <rect x="17" y="13" width="17" height="19" rx="4" fill="#7fa8f0" />
      </TaskIcon>
      <TaskIcon open>
        <path d="M2 5h12l4 4h16v22H4z" fill="#f6d67c" />
        <path d="M3 4h12v6H3z" fill="#d99a24" />
        <path d="M9 32V22q0-4 4-4h12q4 0 4 4v10h-6v-7h-8v7z" fill="#4da0b4" />
      </TaskIcon>
      <TaskIcon>
        <circle cx="18" cy="18" r="14" fill="#f3c62f" />
        <path d="M18 18L6 11a14 14 0 0 1 24 0z" fill="#dc4437" />
        <path d="M18 18L6 11a14 14 0 0 0 10 21z" fill="#219653" />
        <circle cx="18" cy="18" r="6.500" fill="#4a86e8" stroke="#e8e8f0" strokeWidth="1.500" />
      </TaskIcon>
      <TaskIcon>
        <path d="M6 14q1-7 5-9l4 5h6l4-5q5 3 5 9l-2 5 2 8-6 6-3-8h-6l-3 8-6-6 2-8z" fill="#f2f6f4" stroke="#86b3a9" strokeWidth="2.500" strokeDasharray="5 2" />
      </TaskIcon>
      <TaskIcon>
        <path d="M4 4h26v29H4z" fill="#f5f5f0" stroke="#555" strokeWidth="2.500" />
        <path d="M6 20q10-8 22 0v11H6z" fill="#7aa52c" />
        <path d="M34 4L23 27" stroke="#b47828" strokeWidth="4" />
      </TaskIcon>
      <TaskIcon>
        <circle cx="18" cy="18" r="14" fill="#f3c93a" />
        <path d="M5 12q13-7 26 0v13q-13 5-26 0z" fill="#1b1710" />
        <path d="M11 23v-8l5 5 4-5M22 22v-7h5" fill="none" stroke="#e0b52f" strokeWidth="1.500" />
      </TaskIcon>
      <TaskIcon>
        <rect x="4" y="12" width="20" height="20" rx="3" fill="none" stroke="#e39a3c" strokeWidth="4.500" />
        <rect x="12" y="4" width="20" height="22" rx="3" fill="none" stroke="#2b86bd" strokeWidth="4.500" />
        <path d="M19 12h6v8h-6z" fill="#d5e7a8" />
      </TaskIcon>
      <TaskIcon>
        <path d="M3 4h28v20H3z" fill="#2a2a2e" />
        <path d="M12 19l9-6 4 14-6 5z" fill="#d84a4a" />
        <circle cx="27" cy="26" r="6" fill="#aeda2c" />
        <path d="M23 14h9v9h-9z" fill="#4a7fe0" />
      </TaskIcon>
      <TaskIcon active>
        <circle cx="18" cy="18" r="15" fill="#efefef" stroke="#555" strokeWidth="3" />
        <circle cx="12" cy="15" r="1.800" fill="#444" /><circle cx="23" cy="15" r="1.800" fill="#444" />
        <path d="M12 24q6 4 11 0" fill="none" stroke="#444" strokeWidth="2" />
      </TaskIcon>
      <TaskIcon>
        <path d="M7 4h10v14H7z" fill="#3f7ff0" /><path d="M20 2h9v16h-9z" fill="#f7bd15" />
        <path d="M7 19h10l-3 11H7z" fill="#e24f48" /><path d="M20 18h9v13l-9-9z" fill="#4fae56" />
      </TaskIcon>
      <TaskIcon open>
        <path d="M2 2h32v32H2z" fill="#0b0f17" stroke="#2b507c" strokeWidth="3" />
        <path d="M12 8v18M17 8h8v12q0 5-5 6" fill="none" stroke="#b8bcc2" strokeWidth="2.500" />
      </TaskIcon>
      <TaskIcon>
        <rect x="2" y="5" width="27" height="24" rx="7" fill="#3d506c" />
        <circle cx="12" cy="16" r="6" fill="#76aaf0" />
        <rect x="17" y="14" width="17" height="18" rx="4" fill="#2a251f" />
        <path d="M19 30q7-14 13 0z" fill="#cfa671" />
      </TaskIcon>
      <TaskIcon>
        <circle cx="18" cy="18" r="15" fill="#f9ede5" stroke="#e98b65" strokeWidth="3" />
        <path d="M17 9a9 9 0 1 0 0 18z" fill="#fff" />
        <path d="M26 10l-6 8 6 8" fill="none" stroke="#e27c54" strokeWidth="3" />
      </TaskIcon>
      <TaskIcon>
        <path d="M2 2h32v32H2z" fill="#0d5c80" />
        <path d="M11 3v30M25 3v30" stroke="#0a4563" strokeWidth="2.500" />
      </TaskIcon>
      <TaskIcon open>
        <path d="M4 7l7 18 7-13 7 13 7-18" fill="none" stroke="#dd5145" strokeWidth="5.500" strokeLinejoin="round" />
        <path d="M12 8h12" stroke="#f0886c" strokeWidth="4" />
      </TaskIcon>

      <div className="ml-auto mr-[8px] flex h-full items-center border-r-2 border-[#bcc3cd] pr-[34px]">
        <svg viewBox="0 0 26 36" className="h-9 w-[26px]" fill="none" stroke="#555" strokeWidth="3"><path d="M2 23l11-11 11 11" /></svg>
        <svg viewBox="0 0 26 36" className="ml-[17px] h-9 w-[26px]">
          <rect x="5" y="2" width="15" height="21" rx="3" fill="#0b0b0e" />
          <path d="M2 19q1 10 11 10t11-10zM9 27h8v6H9z" fill="#3b3c40" />
        </svg>
        <svg viewBox="0 0 34 34" className="ml-3.5 size-[34px]">
          <circle cx="17" cy="17" r="14" fill="#f5d30e" stroke="#5fa02a" strokeWidth="3.500" strokeDasharray="18 12" />
          <path d="M17 9v16M9 17h16" stroke="#3e7414" strokeWidth="5" />
        </svg>
        <svg viewBox="0 0 34 24" className="ml-3 h-6 w-[34px]">
          <rect x="2" y="4" width="27" height="16" fill="#e8ebef" stroke="#4a4c50" strokeWidth="2.500" />
          <path d="M5 7h16v10H5zM30 8h3v8h-3z" fill="#17181a" />
        </svg>
        <svg viewBox="0 0 28 28" className="ml-3.5 size-7" fill="none" stroke="#66686c" strokeWidth="2.600">
          <path d="M3 25a24 24 0 0 1 22-22M8 25a18 18 0 0 1 17-16M13 25a12 12 0 0 1 12-11M18 25a7 7 0 0 1 7-7" />
          <path d="M2 26L25 2" />
          <circle cx="23" cy="24" r="2.500" fill="#111" stroke="none" />
        </svg>
        <svg viewBox="0 0 30 28" className="ml-3.5 h-7 w-[30px]" fill="none" stroke="#55575b" strokeWidth="2.500">
          <path d="M2 10h5l6-7v22l-6-7H2zM19 9l9 10M28 9l-9 10" />
        </svg>
        <div className="ml-[15px] text-[27px] font-medium text-[#3b4350]">英</div>
        <div className="ml-[23px] w-[59px] text-[22px] tracking-[-0.6px]">19:34</div>
        <svg viewBox="0 0 34 34" className="ml-[30px] size-[34px]">
          <path d="M2 2h30v23h-9l-6 7-5-7H2z" fill="#101114" />
          <path d="M8 9h18v10H8z" fill="#34363b" />
        </svg>
      </div>
    </div>
  );
}

export default function App() {
  return (
    <div className={`flex h-[1600px] w-[2560px] flex-col overflow-hidden bg-black leading-normal [-webkit-text-stroke:0.35px] ${SANS}`}>
      <Banner />
      <div className="flex h-[1382px] shrink-0 flex-col border-x-[3px] border-[#a8aaad] bg-white">
        <TitleBar />
        <MenuBar />
        <Toolbar />
        <Filters />
        <Library />
        <div className="flex min-h-0 grow">
          <Mockups />
          <Workspace />
          <Inspector />
        </div>
      </div>
      <Taskbar />
    </div>
  );
}
